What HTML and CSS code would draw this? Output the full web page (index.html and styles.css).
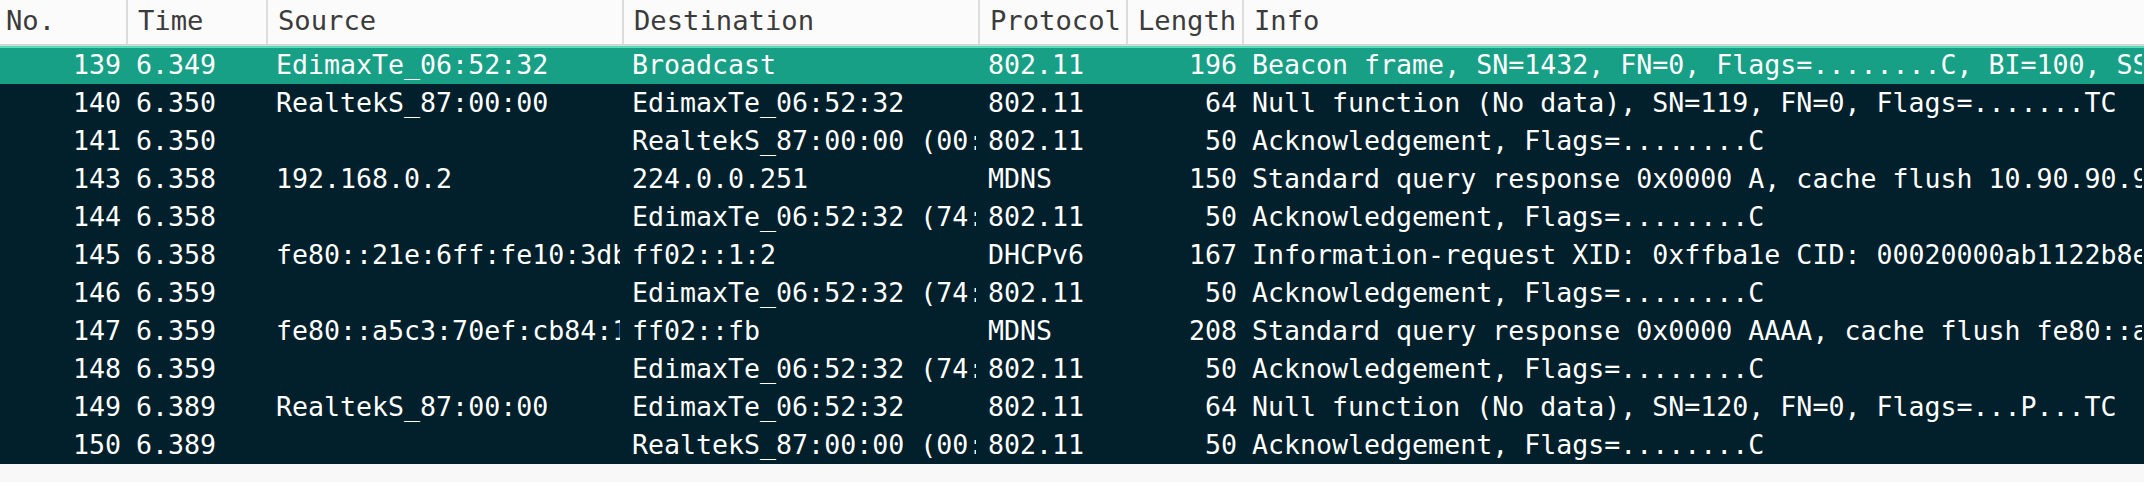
FILE: index.html
```html
<!DOCTYPE html>
<html lang="en">
<head>
<meta charset="utf-8">
<title>Packet list</title>
<link rel="stylesheet" href="styles.css">
</head>
<body>
<div class="packet-list">
  <div class="header cols">
    <div class="hcell">No.</div>
    <div class="hcell">Time</div>
    <div class="hcell">Source</div>
    <div class="hcell">Destination</div>
    <div class="hcell">Protocol</div>
    <div class="hcell">Length</div>
    <div class="hcell">Info</div>
  </div>
  <div class="rows">
    <div class="row selected cols">
      <div class="cell num">139</div><div class="cell">6.349</div><div class="cell">EdimaxTe_06:52:32</div><div class="cell">Broadcast</div><div class="cell">802.11</div><div class="cell num">196</div><div class="cell">Beacon frame, SN=1432, FN=0, Flags=........C, BI=100, SSID=Edimax</div>
    </div>
    <div class="row cols">
      <div class="cell num">140</div><div class="cell">6.350</div><div class="cell">RealtekS_87:00:00</div><div class="cell">EdimaxTe_06:52:32</div><div class="cell">802.11</div><div class="cell num">64</div><div class="cell">Null function (No data), SN=119, FN=0, Flags=.......TC</div>
    </div>
    <div class="row cols">
      <div class="cell num">141</div><div class="cell">6.350</div><div class="cell"></div><div class="cell">RealtekS_87:00:00 (00:e0:4c:87:00:00) (RA)</div><div class="cell">802.11</div><div class="cell num">50</div><div class="cell">Acknowledgement, Flags=........C</div>
    </div>
    <div class="row cols">
      <div class="cell num">143</div><div class="cell">6.358</div><div class="cell">192.168.0.2</div><div class="cell">224.0.0.251</div><div class="cell">MDNS</div><div class="cell num">150</div><div class="cell">Standard query response 0x0000 A, cache flush 10.90.90.90 PTR</div>
    </div>
    <div class="row cols">
      <div class="cell num">144</div><div class="cell">6.358</div><div class="cell"></div><div class="cell">EdimaxTe_06:52:32 (74:da:38:06:52:32) (RA)</div><div class="cell">802.11</div><div class="cell num">50</div><div class="cell">Acknowledgement, Flags=........C</div>
    </div>
    <div class="row cols">
      <div class="cell num">145</div><div class="cell">6.358</div><div class="cell">fe80::21e:6ff:fe10:3dbc</div><div class="cell">ff02::1:2</div><div class="cell">DHCPv6</div><div class="cell num">167</div><div class="cell">Information-request XID: 0xffba1e CID: 00020000ab1122b8e1f0</div>
    </div>
    <div class="row cols">
      <div class="cell num">146</div><div class="cell">6.359</div><div class="cell"></div><div class="cell">EdimaxTe_06:52:32 (74:da:38:06:52:32) (RA)</div><div class="cell">802.11</div><div class="cell num">50</div><div class="cell">Acknowledgement, Flags=........C</div>
    </div>
    <div class="row cols">
      <div class="cell num">147</div><div class="cell">6.359</div><div class="cell">fe80::a5c3:70ef:cb84:1c2f</div><div class="cell">ff02::fb</div><div class="cell">MDNS</div><div class="cell num">208</div><div class="cell">Standard query response 0x0000 AAAA, cache flush fe80::a5c3:70ef</div>
    </div>
    <div class="row cols">
      <div class="cell num">148</div><div class="cell">6.359</div><div class="cell"></div><div class="cell">EdimaxTe_06:52:32 (74:da:38:06:52:32) (RA)</div><div class="cell">802.11</div><div class="cell num">50</div><div class="cell">Acknowledgement, Flags=........C</div>
    </div>
    <div class="row cols">
      <div class="cell num">149</div><div class="cell">6.389</div><div class="cell">RealtekS_87:00:00</div><div class="cell">EdimaxTe_06:52:32</div><div class="cell">802.11</div><div class="cell num">64</div><div class="cell">Null function (No data), SN=120, FN=0, Flags=...P...TC</div>
    </div>
    <div class="row cols">
      <div class="cell num">150</div><div class="cell">6.389</div><div class="cell"></div><div class="cell">RealtekS_87:00:00 (00:e0:4c:87:00:00) (RA)</div><div class="cell">802.11</div><div class="cell num">50</div><div class="cell">Acknowledgement, Flags=........C</div>
    </div>
  </div>
</div>
</body>
</html>
```

FILE: styles.css
```css
html, body {
  margin: 0;
  padding: 0;
}

body {
  background: #f8f8f8;
  font-family: "DejaVu Sans Mono", "Liberation Mono", monospace;
  font-size: 26.6px;
  overflow: hidden;
}

.packet-list {
  width: 100%;
}

.cols {
  display: grid;
  grid-template-columns: 126px 140px 356px 356px 148px 116px minmax(0, 1fr);
}

.header {
  background: #fbfbfb;
  color: #3b3b3b;
  border-bottom: 2px solid #d6d6d6;
  font-size: 27.2px;
}

.hcell {
  line-height: 42px;
  padding-bottom: 2px;
  padding-left: 10px;
  border-left: 2px solid #dcdcdc;
  white-space: nowrap;
  overflow: hidden;
  min-width: 0;
}

.hcell:first-child {
  border-left: none;
  padding-left: 6px;
}

.row {
  background: #01202b;
  color: #ffffff;
  height: 38px;
  line-height: 38px;
}

.row.selected {
  background: #17a085;
  box-shadow: inset 0 2px 0 #55dfb8;
}

.cell {
  padding-left: 10px;
  border-right: 2px solid transparent;
  white-space: nowrap;
  overflow: hidden;
  min-width: 0;
}

.cell.num {
  text-align: right;
  padding-left: 0;
  padding-right: 3px;
}
```
